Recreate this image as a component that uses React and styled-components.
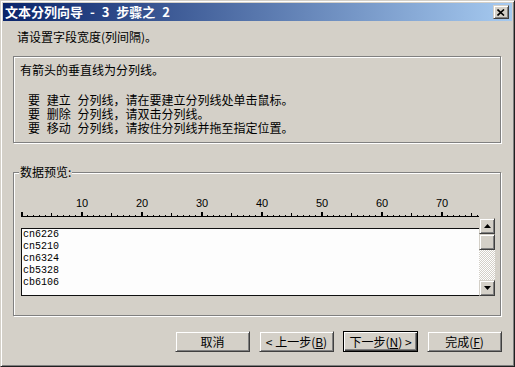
import React from 'react';
import styled, { createGlobalStyle } from 'styled-components';

const cjk = `"Noto Sans CJK SC", "Liberation Sans", sans-serif`;

const GlobalStyle = createGlobalStyle`
  html, body { margin: 0; padding: 0; background: #d4d0c8; overflow: hidden; }
  #root { width: 515px; height: 367px; }
`;

const Window = styled.div`
  box-sizing: border-box;
  width: 515px;
  height: 367px;
  background: #d4d0c8;
  border: 1px solid;
  border-color: #d4d0c8 #202020 #202020 #d4d0c8;
  box-shadow: inset 1px 1px #fff, inset -1px -1px #808080;
  padding: 2px;
  display: flex;
  flex-direction: column;
  font-family: ${cjk};
  font-size: 12px;
  color: #000;
`;

const TitleBar = styled.div`
  height: 18px;
  flex: none;
  display: flex;
  align-items: center;
  justify-content: space-between;
  padding: 0 3px 0 2px;
  background: linear-gradient(to right, #0a246a, #a6caf0);
`;

const Title = styled.span`
  color: #fff;
  font-weight: bold;
  font-size: 13px;
  line-height: 18px;
  word-spacing: 4px;
  white-space: pre;
`;

const raised = `
  box-sizing: border-box;
  background: #d4d0c8;
  border: 1px solid;
  border-color: #d4d0c8 #404040 #404040 #d4d0c8;
  box-shadow: inset 1px 1px #fff, inset -1px -1px #808080;
`;

const CloseBtn = styled.div`
  ${raised}
  width: 16px;
  height: 14px;
  display: flex;
  align-items: center;
  justify-content: center;
`;

const Body = styled.div`
  flex: 1;
  display: flex;
  flex-direction: column;
  padding: 0 11px 0 10px;
`;

const Prompt = styled.div`
  margin-top: 9px;
  padding-left: 4px;
  line-height: 14px;
`;

const etched = `
  box-sizing: border-box;
  border: 1px solid #808080;
  box-shadow: inset 1px 1px #fff, 1px 1px #fff;
`;

const InfoBox = styled.div`
  ${etched}
  margin-top: 12px;
  height: 87px;
  padding: 6px 6px;
  line-height: 14px;
`;

const Steps = styled.div`
  margin-top: 16px;
  padding-left: 8px;
  word-spacing: 4px;
  white-space: pre;
`;

const Group = styled.div`
  ${etched}
  position: relative;
  margin-top: 29px;
  height: 144px;
  padding: 17px 0 0 7px;
`;

const Legend = styled.span`
  position: absolute;
  top: -9px;
  left: 5px;
  padding: 0 1px;
  background: #d4d0c8;
  line-height: 16px;
`;

const Preview = styled.div`
  display: grid;
  grid-template-columns: 458px 16px;
  grid-template-rows: 38px 68px;
`;

const Ruler = styled.svg`
  display: block;
  grid-column: 1;
  grid-row: 1;
`;

const List = styled.div`
  grid-column: 1;
  grid-row: 2;
  box-sizing: border-box;
  background: #fdfdfd;
  border: 1px solid #101010;
  border-right: none;
  padding-left: 1px;
  font-family: "Liberation Mono", monospace;
  font-size: 10px;
  line-height: 12px;
`;

const Scrollbar = styled.div`
  grid-column: 2;
  grid-row: 1 / 3;
  margin-top: 28px;
  display: flex;
  flex-direction: column;
`;

const ScrollBtn = styled.div`
  ${raised}
  width: 16px;
  height: 16px;
  flex: none;
  display: flex;
  align-items: center;
  justify-content: center;
`;

const Track = styled.div`
  flex: 1;
  background-color: #d4d0c8;
  background-image: conic-gradient(#fff 25%, transparent 0 50%, #fff 0 75%, transparent 0);
  background-size: 2px 2px;
`;

const ButtonRow = styled.div`
  margin-top: 15px;
  margin-right: -1px;
  display: flex;
  justify-content: flex-end;
  gap: 9px;
`;

const Button = styled.div`
  ${raised}
  width: 75px;
  height: 21px;
  display: flex;
  align-items: center;
  justify-content: center;
  line-height: 16px;
  ${p => p.$default && `
    border-color: #000;
    box-shadow: inset 1px 1px #fff, inset -1px -1px #404040, inset -2px -2px #808080;
  `}
`;

const rows = ['cn6226', 'cn5210', 'cn6324', 'cb5328', 'cb6106'];

function RulerDrawing() {
  const marks = [];
  for (let i = 0; i <= 76; i++) {
    const x = i * 6;
    if (i % 10 === 0) marks.push(<rect key={i} x={x} y={22} width={2} height={4} />);
    else if (i % 5 === 0) marks.push(<rect key={i} x={x} y={23} width={1} height={3} />);
    else marks.push(<rect key={i} x={x} y={25} width={1} height={1} />);
  }
  const nums = [10, 20, 30, 40, 50, 60, 70];
  return (
    <Ruler width="458" height="38" viewBox="0 0 458 38">
      <g fill="#000">
        <rect x={0} y={26} width={458} height={1} />
        {marks}
      </g>
      {nums.map(n => (
        <text key={n} x={n * 6 + 1} y={17} textAnchor="middle"
          fontFamily="Liberation Sans, sans-serif" fontSize="11" fill="#000">{n}</text>
      ))}
    </Ruler>
  );
}

const Arrow = ({ down }) => (
  <svg width="7" height="4" viewBox="0 0 7 4">
    <path d={down ? 'M0 0H7L3.5 4Z' : 'M0 4H7L3.5 0Z'} fill="#000" />
  </svg>
);

export default function App() {
  return (
    <Window>
      <GlobalStyle />
      <TitleBar>
        <Title>文本分列向导 - 3 步骤之 2</Title>
        <CloseBtn>
          <svg width="8" height="7" viewBox="0 0 8 7">
            <path d="M0.5 0.5L7 6.5M7 0.5L0.5 6.5" stroke="#000" strokeWidth="1.6" />
          </svg>
        </CloseBtn>
      </TitleBar>
      <Body>
        <Prompt>请设置字段宽度(列间隔)。</Prompt>
        <InfoBox>
          <div>有箭头的垂直线为分列线。</div>
          <Steps>
            <div>要 建立 分列线，请在要建立分列线处单击鼠标。</div>
            <div>要 删除 分列线，请双击分列线。</div>
            <div>要 移动 分列线，请按住分列线并拖至指定位置。</div>
          </Steps>
        </InfoBox>
        <Group>
          <Legend>数据预览:</Legend>
          <Preview>
            <RulerDrawing />
            <List>
              {rows.map(r => <div key={r}>{r}</div>)}
            </List>
            <Scrollbar>
              <ScrollBtn><Arrow /></ScrollBtn>
              <ScrollBtn />
              <Track />
              <ScrollBtn><Arrow down /></ScrollBtn>
            </Scrollbar>
          </Preview>
        </Group>
        <ButtonRow>
          <Button>取消</Button>
          <Button>&lt; 上一步(<u>B</u>)</Button>
          <Button $default>下一步(<u>N</u>) &gt;</Button>
          <Button>完成(<u>F</u>)</Button>
        </ButtonRow>
      </Body>
    </Window>
  );
}
